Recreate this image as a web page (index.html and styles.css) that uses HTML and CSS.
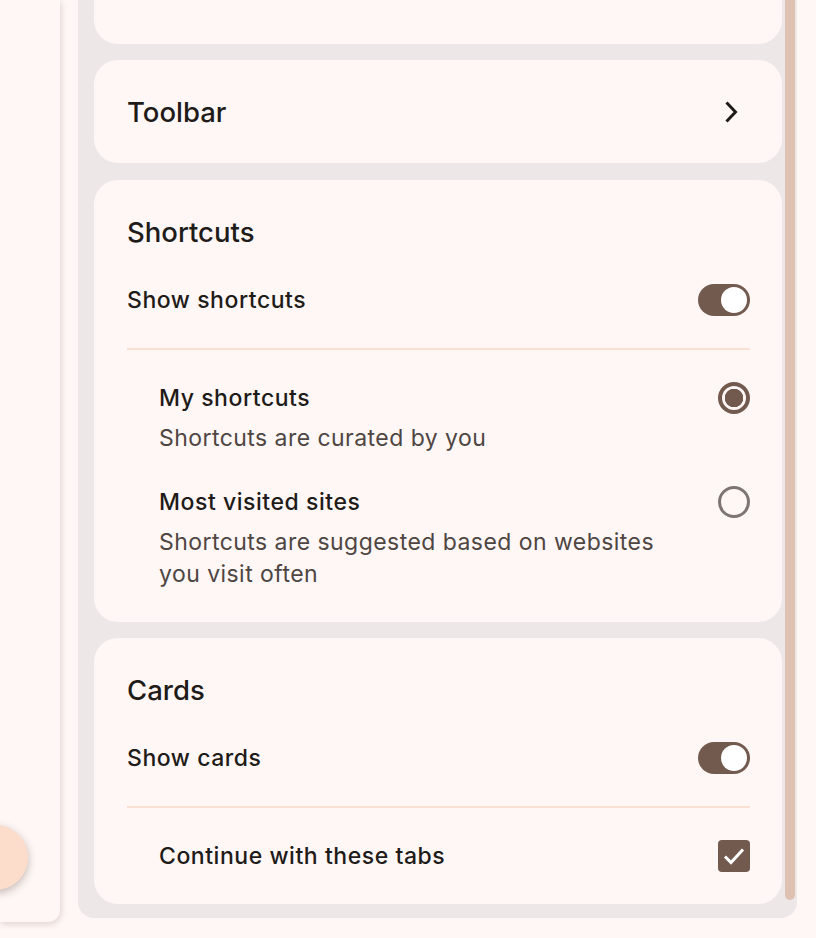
FILE: index.html
```html
<!DOCTYPE html>
<html lang="en">
<head>
    <meta charset="UTF-8">
    <meta name="viewport" content="width=device-width, initial-scale=1.0">
    <title>Customize Chrome</title>
    <link rel="stylesheet" href="styles.css">
</head>
<body>
    <aside class="rail">
        <button class="fab" aria-label="Edit"></button>
    </aside>

    <main class="panel">
        <div class="list">
            <section class="card card-cut"></section>

            <section class="card card-link">
                <h2>Toolbar</h2>
                <svg class="chevron" width="14" height="22" viewBox="0 0 14 22">
                    <path d="M2.5 1.5 L11.5 11 L2.5 20.5" fill="none" stroke="#1f1b19" stroke-width="3"/>
                </svg>
            </section>

            <section class="card">
                <h2>Shortcuts</h2>
                <div class="row">
                    <span class="label">Show shortcuts</span>
                    <span class="toggle"><span class="knob"></span></span>
                </div>
                <hr class="divider">
                <div class="option">
                    <div class="option-text">
                        <div class="label">My shortcuts</div>
                        <div class="desc">Shortcuts are curated by you</div>
                    </div>
                    <span class="radio checked"></span>
                </div>
                <div class="option">
                    <div class="option-text">
                        <div class="label">Most visited sites</div>
                        <div class="desc">Shortcuts are suggested based on websites you visit often</div>
                    </div>
                    <span class="radio"></span>
                </div>
            </section>

            <section class="card">
                <h2>Cards</h2>
                <div class="row">
                    <span class="label">Show cards</span>
                    <span class="toggle"><span class="knob"></span></span>
                </div>
                <hr class="divider">
                <div class="option">
                    <div class="option-text">
                        <div class="label">Continue with these tabs</div>
                    </div>
                    <span class="checkbox">
                        <svg width="32" height="32" viewBox="0 0 32 32">
                            <path d="M7 16.5 L13 22.5 L25 9.5" fill="none" stroke="#fff" stroke-width="3"/>
                        </svg>
                    </span>
                </div>
            </section>
        </div>
        <div class="scrollbar"></div>
    </main>
</body>
</html>
```

FILE: styles.css
```css
body {
    margin: 0;
    height: 938px;
    display: flex;
    align-items: flex-start;
    background: #fef7f5;
    font-family: Inter, 'Noto Sans', sans-serif;
    color: #1f1b19;
    overflow: hidden;
}

.rail {
    position: relative;
    width: 60px;
    height: 922px;
    flex-shrink: 0;
    background: #fef7f5;
    border-bottom-right-radius: 12px;
    box-shadow: 1px 2px 6px rgba(80, 50, 40, 0.18);
}

.fab {
    position: absolute;
    left: -37px;
    top: 825px;
    width: 65px;
    height: 65px;
    border: none;
    border-radius: 50%;
    background: #fcdccb;
    box-shadow: 0 3px 8px rgba(60, 40, 30, 0.3);
}

.panel {
    margin-left: 18px;
    width: 719px;
    height: 918px;
    box-sizing: border-box;
    padding: 0 2px 14px 16px;
    display: flex;
    gap: 3px;
    background: #ede7e8;
    border-radius: 0 0 16px 16px;
}

.list {
    flex: 1;
    display: flex;
    flex-direction: column;
    gap: 16px;
}

.card {
    background: #fef7f5;
    border-radius: 24px;
    padding: 32px 32px 32px 33px;
}

.card-cut {
    height: 44px;
    padding: 0;
    border-radius: 0 0 24px 24px;
}

.card-link {
    display: flex;
    align-items: center;
    justify-content: space-between;
    height: 103px;
    box-sizing: border-box;
    padding-top: 0;
    padding-bottom: 0;
    padding-right: 44px;
    margin-bottom: 1px;
}

.chevron {
    display: block;
}

.card h2 {
    margin: 0;
    font-size: 27.5px;
    font-weight: 500;
    line-height: 40px;
}

.row {
    display: flex;
    align-items: center;
    justify-content: space-between;
    height: 48px;
    margin-top: 24px;
}

.label {
    font-size: 23px;
    font-weight: 500;
    letter-spacing: 0.55px;
    line-height: 32px;
}

.divider {
    margin: 24px 0 0;
    border: none;
    border-top: 2px solid #fadfd3;
}

.option {
    display: flex;
    align-items: flex-start;
    justify-content: space-between;
    padding-left: 32px;
    margin-top: 32px;
}

.option-text {
    flex: 1;
    margin-right: 32px;
}

.desc {
    margin-top: 8px;
    font-size: 23px;
    letter-spacing: 0.45px;
    line-height: 32px;
    color: #4f4542;
}

.toggle {
    position: relative;
    width: 52px;
    height: 32px;
    border-radius: 16px;
    background: #735a4f;
}

.knob {
    position: absolute;
    right: 3px;
    top: 3px;
    width: 26px;
    height: 26px;
    border-radius: 50%;
    background: #fff;
}

.radio {
    width: 32px;
    height: 32px;
    box-sizing: border-box;
    border: 3px solid #7c7572;
    border-radius: 50%;
    flex-shrink: 0;
}

.radio.checked {
    border: 4px solid #735a4f;
    background: radial-gradient(circle, #735a4f 0 9px, transparent 9.5px);
}

.checkbox {
    width: 32px;
    height: 32px;
    border-radius: 4px;
    background: #735a4f;
    flex-shrink: 0;
}

.checkbox svg {
    display: block;
}

.scrollbar {
    width: 10px;
    height: 900px;
    background: #dfc1b2;
    border-radius: 0 0 5px 5px;
}
```
